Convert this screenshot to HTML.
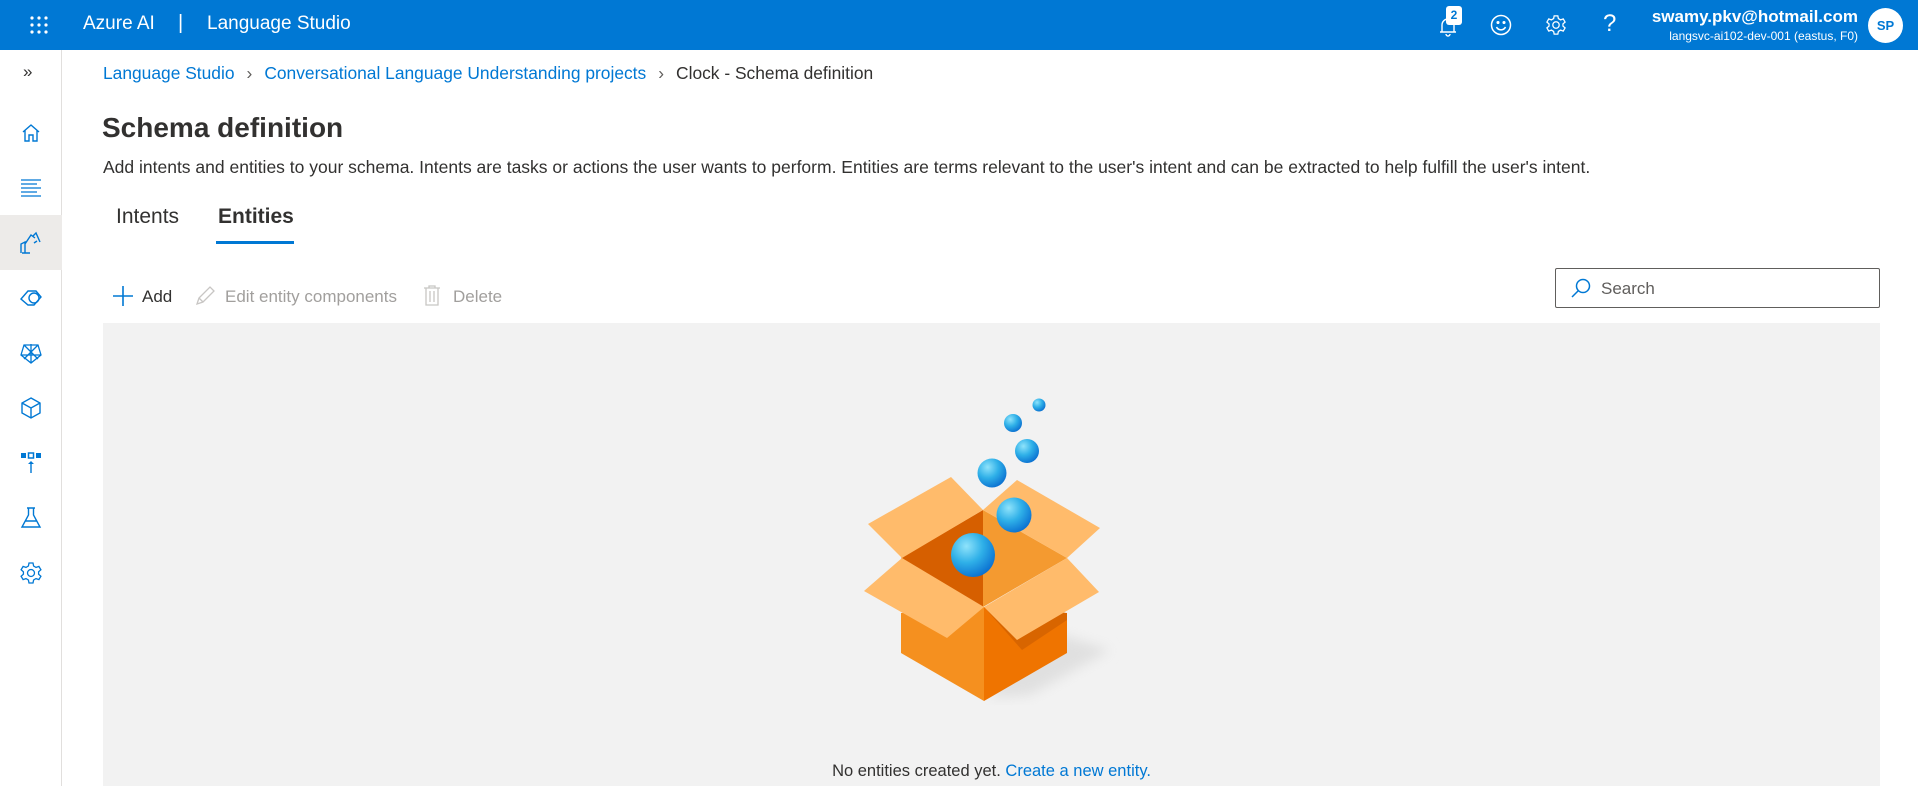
<!DOCTYPE html>
<html><head><meta charset="utf-8"><style>
*{margin:0;padding:0;box-sizing:border-box}
body{width:1918px;height:786px;overflow:hidden;background:#fff;font-family:"Liberation Sans",sans-serif;color:#323130;position:relative}
.hdr{position:absolute;left:0;top:0;width:1918px;height:50px;background:#0078d4;color:#fff}
.abs{position:absolute}
.side{position:absolute;left:0;top:50px;width:62px;height:736px;border-right:1px solid #e1dfdd;background:#fff}
.ic{position:absolute;left:19px;width:24px;height:24px}
</style></head><body>
<div class="hdr">
 <svg class="abs" style="left:29px;top:15px" width="20" height="20" viewBox="0 0 20 20" fill="#fff">
  <circle cx="3" cy="3" r="1.6"/><circle cx="10" cy="3" r="1.6"/><circle cx="17" cy="3" r="1.6"/>
  <circle cx="3" cy="10" r="1.6"/><circle cx="10" cy="10" r="1.6"/><circle cx="17" cy="10" r="1.6"/>
  <circle cx="3" cy="17" r="1.6"/><circle cx="10" cy="17" r="1.6"/><circle cx="17" cy="17" r="1.6"/></svg>
 <div class="abs" style="left:83px;top:13px;font-size:19px">Azure AI</div>
 <div class="abs" style="left:178px;top:12px;font-size:20px">|</div>
 <div class="abs" style="left:207px;top:13px;font-size:19px">Language Studio</div>
 <svg class="abs" style="left:1436px;top:14px" width="24" height="24" viewBox="0 0 24 24" fill="none" stroke="#fff" stroke-width="1.4"><path d="M6 18V11a6 6 0 0 1 12 0v7zM4 18h16M10 20a2 2 0 0 0 4 0"/></svg>
 <div class="abs" style="left:1446px;top:6px;width:16px;height:19px;background:#fff;border-radius:3px;color:#0078d4;font-size:12px;font-weight:bold;text-align:center;line-height:19px">2</div>
 <svg class="abs" style="left:1490px;top:14px" width="22" height="22" viewBox="0 0 22 22" fill="none" stroke="#fff" stroke-width="1.5"><circle cx="11" cy="11" r="9.5"/><path d="M6.5 13a5 5 0 0 0 9 0"/><circle cx="8" cy="8.5" r=".8" fill="#fff"/><circle cx="14" cy="8.5" r=".8" fill="#fff"/></svg>
 <svg class="abs" style="left:1545px;top:14px" width="22" height="22" viewBox="0 0 24 24" fill="none" stroke="#fff" stroke-width="1.4"><circle cx="12" cy="12" r="3.5"/><path d="M10 2h4l.6 3 2.4 1.4 2.9-1 2 3.4-2.3 2v2.4l2.3 2-2 3.4-2.9-1L14.6 19 14 22h-4l-.6-3L7 17.6l-2.9 1-2-3.4 2.3-2v-2.4l-2.3-2 2-3.4 2.9 1L9.4 5z"/></svg>
 <div class="abs" style="left:1603px;top:10px;font-size:24px;font-weight:300">?</div>
 <div class="abs" style="right:60px;top:7px;font-size:17px;font-weight:bold;text-align:right">swamy.pkv@hotmail.com</div>
 <div class="abs" style="right:60px;top:29px;font-size:12px;text-align:right">langsvc-ai102-dev-001 (eastus, F0)</div>
 <div class="abs" style="left:1868px;top:8px;width:35px;height:35px;border-radius:50%;background:#fff;color:#0078d4;font-size:13px;font-weight:bold;text-align:center;line-height:35px">SP</div>
</div>
<div class="side">
 <div class="abs" style="left:0;top:165px;width:62px;height:55px;background:#edebe9"></div>
 <div class="abs" style="left:23px;top:12px;font-size:17px;color:#323130">»</div>
 <svg class="ic" style="top:71px" viewBox="0 0 24 24" fill="none" stroke="#0078d4" stroke-width="1.4"><path d="M4 11l8-7 8 7M6 9v11h4v-6h4v6h4V9"/></svg>
 <svg class="ic" style="top:126px" viewBox="0 0 24 24" fill="none" stroke="#0078d4" stroke-width="1.2"><path d="M2 4h20M2 8h16M2 12h20M2 16h16M2 20h20"/></svg>
 <svg class="ic" style="top:181px" viewBox="0 0 24 24" fill="none" stroke="#0078d4" stroke-width="1.4"><path d="M2 22v-9l4-2v11M6 13l6-9 4 3M14 5l3-3 4 9M3 22h8M15 12l3-2"/></svg>
 <svg class="ic" style="top:236px" viewBox="0 0 24 24" fill="none" stroke="#0078d4" stroke-width="1.4"><path d="M2 13l7-8h8l5 6-7 8H9z"/><circle cx="15" cy="12" r="5"/></svg>
 <svg class="ic" style="top:291px" viewBox="0 0 24 24" fill="none" stroke="#0078d4" stroke-width="1.3"><path d="M5 4l14 0 3 10-10 8-10-8zM5 4l14 14M19 4L5 18M2 14h20M12 3v19"/></svg>
 <svg class="ic" style="top:346px" viewBox="0 0 24 24" fill="none" stroke="#0078d4" stroke-width="1.4"><path d="M12 2l9 5v10l-9 5-9-5V7zM3 7l9 5 9-5M12 12v10"/></svg>
 <svg class="ic" style="top:401px" viewBox="0 0 24 24" fill="#0078d4"><rect x="2" y="2" width="5" height="5"/><rect x="9.5" y="2" width="5" height="5" fill="none" stroke="#0078d4" stroke-width="1.5"/><rect x="17" y="2" width="5" height="5"/><path d="M12 10l-3 3h2.3v9h1.4v-9H15z"/></svg>
 <svg class="ic" style="top:456px" viewBox="0 0 24 24" fill="none" stroke="#0078d4" stroke-width="1.4"><path d="M8 2h8M9.5 2v7L3 21h18L14.5 9V2M6 15h12"/></svg>
 <svg class="ic" style="top:511px" viewBox="0 0 24 24" fill="none" stroke="#0078d4" stroke-width="1.3"><circle cx="12" cy="12" r="3.5"/><path d="M10 2h4l.6 3 2.4 1.4 2.9-1 2 3.4-2.3 2v2.4l2.3 2-2 3.4-2.9-1L14.6 19 14 22h-4l-.6-3L7 17.6l-2.9 1-2-3.4 2.3-2v-2.4l-2.3-2 2-3.4 2.9 1L9.4 5z"/></svg>
</div>
<div class="abs" style="left:103px;top:63px;font-size:17.4px;white-space:nowrap"><span style="color:#0078d4">Language Studio</span><span style="color:#605e5c;margin:0 12px">›</span><span style="color:#0078d4">Conversational Language Understanding projects</span><span style="color:#605e5c;margin:0 12px">›</span><span>Clock - Schema definition</span></div>
<div class="abs" style="left:102px;top:112px;font-size:28px;font-weight:bold">Schema definition</div>
<div class="abs" style="left:103px;top:157px;font-size:17.5px;white-space:nowrap">Add intents and entities to your schema. Intents are tasks or actions the user wants to perform. Entities are terms relevant to the user's intent and can be extracted to help fulfill the user's intent.</div>
<div class="abs" style="left:116px;top:205px;font-size:21px">Intents</div>
<div class="abs" style="left:218px;top:205px;font-size:21px;font-weight:bold">Entities</div>
<div class="abs" style="left:216px;top:241px;width:78px;height:3px;background:#0078d4"></div>
<svg class="abs" style="left:112px;top:285px" width="22" height="22" viewBox="0 0 22 22" stroke="#0078d4" stroke-width="1.6"><path d="M11 1v20M1 11h20"/></svg>
<div class="abs" style="left:142px;top:287px;font-size:17px">Add</div>
<svg class="abs" style="left:194px;top:285px" width="22" height="22" viewBox="0 0 22 22" fill="none" stroke="#c8c6c4" stroke-width="1.3"><path d="M3 19l2-6L16 2l4 4L9 17zM5 13l4 4"/></svg>
<div class="abs" style="left:225px;top:287px;font-size:17px;color:#a19f9d">Edit entity components</div>
<svg class="abs" style="left:422px;top:284px" width="20" height="22" viewBox="0 0 20 22" fill="none" stroke="#c8c6c4" stroke-width="1.3"><path d="M2 4h16M7 4V2h6v2M4 4v17h12V4M8 7v11M12 7v11"/></svg>
<div class="abs" style="left:453px;top:287px;font-size:17px;color:#a19f9d">Delete</div>
<div class="abs" style="left:1555px;top:268px;width:325px;height:40px;border:1px solid #605e5c;border-radius:2px"></div>
<svg class="abs" style="left:1570px;top:277px" width="22" height="22" viewBox="0 0 22 22" fill="none" stroke="#0078d4" stroke-width="1.5"><circle cx="13" cy="9" r="6.5"/><path d="M8.5 13.5L2 20"/></svg>
<div class="abs" style="left:1601px;top:279px;font-size:17px;color:#605e5c">Search</div>
<div class="abs" style="left:103px;top:323px;width:1777px;height:463px;background:#f2f2f2"></div>
<svg class="abs" style="left:0;top:0" width="1918" height="786">
 <defs>
  <radialGradient id="b" cx="0.35" cy="0.3" r="0.75"><stop offset="0" stop-color="#8fe3fb"/><stop offset="0.5" stop-color="#2fb0e8"/><stop offset="1" stop-color="#0a6fd0"/></radialGradient>
  <filter id="bl"><feGaussianBlur stdDeviation="6"/></filter>
 </defs>
 <polygon points="1030,625 1110,650 1030,695 990,698" fill="#e0e0e0" filter="url(#bl)"/>
 <polygon points="901,558 983,510 983,607" fill="#d65f00"/>
 <polygon points="983,510 1067,558 983,607" fill="#f49a30"/>
 <polygon points="951,477 983,510 902,558 868,524" fill="#ffbb6b"/>
 <polygon points="1017,480 1100,528 1067,558 983,510" fill="#ffbb6b"/>
 <polygon points="901,613 984,607 984,701 901,653" fill="#f5901f"/>
 <polygon points="984,607 1067,613 1067,653 984,701" fill="#ef7400"/>
 <polygon points="984,607 1067,613 1067,620 1022,650" fill="#d86500"/>
 <polygon points="902,558 984,607 947,638 864,591" fill="#ffbb6b"/>
 <polygon points="984,607 1067,558 1099,592 1017,640" fill="#ffbb6b"/>
 <circle cx="973" cy="555" r="22" fill="url(#b)"/>
 <circle cx="1014" cy="515" r="17.5" fill="url(#b)"/>
 <circle cx="992" cy="473" r="14.5" fill="url(#b)"/>
 <circle cx="1027" cy="451" r="12" fill="url(#b)"/>
 <circle cx="1013" cy="423" r="9" fill="url(#b)"/>
 <circle cx="1039" cy="405" r="6.5" fill="url(#b)"/>
</svg>
<div class="abs" style="left:0;width:1983px;text-align:center;top:762px;font-size:16.5px">No entities created yet. <span style="color:#0078d4">Create a new entity.</span></div>
</body></html>
